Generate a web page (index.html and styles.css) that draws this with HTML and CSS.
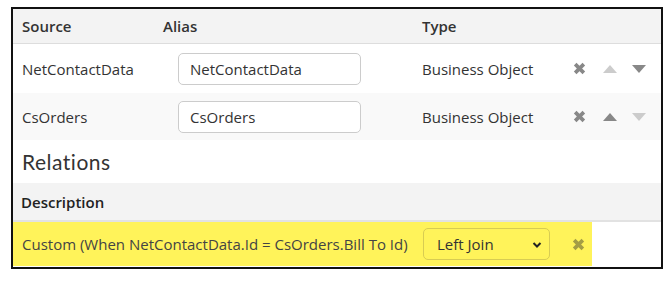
FILE: index.html
```html
<!DOCTYPE html>
<html>
<head>
<meta charset="utf-8">
<link rel="stylesheet" href="styles.css">
</head>
<body>
<div class="frame">
  <div class="grid head">
    <div class="cell c1">Source</div>
    <div class="cell">Alias</div>
    <div class="cell">Type</div>
    <div class="cell"></div>
  </div>
  <div class="grid row r1">
    <div class="cell c1">NetContactData</div>
    <div class="cell"><input class="alias" type="text" value="NetContactData"></div>
    <div class="cell">Business Object</div>
    <div class="cell actions">
      <svg class="x" viewBox="0 0 12 12" width="13" height="13"><path d="M2 2 L10 10 M10 2 L2 10" /></svg>
      <svg class="tri dis" viewBox="0 0 14 8" width="14" height="8"><path d="M7 0 L14 8 L0 8 Z"/></svg>
      <svg class="tri" viewBox="0 0 14 8" width="14" height="8"><path d="M0 0 L14 0 L7 8 Z"/></svg>
    </div>
  </div>
  <div class="grid row r2">
    <div class="cell c1">CsOrders</div>
    <div class="cell"><input class="alias" type="text" value="CsOrders"></div>
    <div class="cell">Business Object</div>
    <div class="cell actions">
      <svg class="x" viewBox="0 0 12 12" width="13" height="13"><path d="M2 2 L10 10 M10 2 L2 10" /></svg>
      <svg class="tri" viewBox="0 0 14 8" width="14" height="8"><path d="M7 0 L14 8 L0 8 Z"/></svg>
      <svg class="tri dis" viewBox="0 0 14 8" width="14" height="8"><path d="M0 0 L14 0 L7 8 Z"/></svg>
    </div>
  </div>
  <h2 class="section">Relations</h2>
  <div class="desc-head">Description</div>
  <div class="rel-row">
    <div class="hl">
      <span class="rel-text">Custom (When NetContactData.Id = CsOrders.Bill To Id)</span>
      <div class="select">Left Join
        <svg class="chev" viewBox="0 0 10 8" width="10" height="8"><path d="M1.5 2 L5 5.5 L8.5 2"/></svg>
      </div>
      <svg class="x x-hl" viewBox="0 0 12 12" width="13" height="13"><path d="M2 2 L10 10 M10 2 L2 10" /></svg>
    </div>
  </div>
</div>
</body>
</html>
```
FILE: styles.css
```css
* { box-sizing: border-box; }
body {
  margin: 0;
  font-family: "Open Sans", "Noto Sans", sans-serif;
  font-size: 15px;
  color: #333;
  background: #fff;
}
.frame {
  margin: 7px 0 0 11px;
  width: 652px;
  height: 262px;
  border: 2px solid #111;
}
.grid {
  display: grid;
  grid-template-columns: 150px 259px 150px 1fr;
  align-items: center;
}
.head {
  height: 35px;
  background: #f3f3f3;
  border-bottom: 1px solid #ddd;
  font-weight: 600;
  color: #333;
}
.c1 { padding-left: 9px; }
.row { height: 49px; }
.r2 { height: 47px; background: #f9f9f9; }
.alias {
  margin-left: 15px;
  width: 183px;
  height: 32px;
  border: 1px solid #ccc;
  border-radius: 5px;
  padding: 0 11px;
  font-family: inherit;
  font-size: 15px;
  color: #333;
  background: #fff;
  outline: none;
}
.actions {
  display: flex;
  align-items: center;
  padding-left: 1px;
}
.x path { stroke: #888; stroke-width: 3.4; fill: none; }
.actions .x { margin-right: 17px; }
.tri { margin-right: 15px; }
.tri path { fill: #888; }
.tri.dis path { fill: #ccc; }
.section {
  margin: 0;
  height: 43px;
  display: flex;
  align-items: center;
  padding-left: 9px;
  font-family: "Lato", "Open Sans", sans-serif;
  font-weight: 400;
  font-size: 21px;
  letter-spacing: 0.5px;
  color: #333;
}
.desc-head {
  height: 39px;
  background: #f3f3f3;
  border-bottom: 2px solid #e2e2e2;
  display: flex;
  align-items: center;
  padding-left: 8px;
  font-weight: 600;
  color: #222;
}
.rel-row { height: 44px; }
.hl {
  width: 579px;
  height: 44px;
  background: #fff35a;
  display: flex;
  align-items: center;
  padding-left: 9px;
}
.rel-text { width: 401px; color: #444; white-space: nowrap; }
.select {
  width: 127px;
  height: 32px;
  border: 1px solid #d8cc52;
  border-radius: 5px;
  display: flex;
  align-items: center;
  padding-left: 13px;
  position: relative;
  color: #333;
}
.chev {
  position: absolute;
  right: 7px;
  top: 12px;
}
.chev path { stroke: #222; stroke-width: 2; fill: none; }
.x-hl { margin-left: 22px; }
.x-hl path { stroke: #a49d45; }
```
